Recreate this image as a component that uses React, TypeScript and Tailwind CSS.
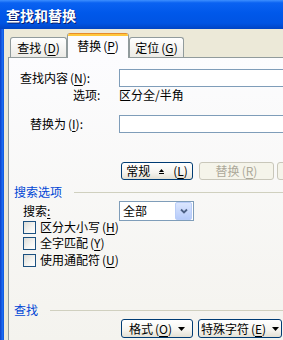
import React from "react";

const U = ({ c }: { c: string }) => (
  <span className="ml-[2px]">
    (<span className="underline underline-offset-[2px]">{c}</span>)
  </span>
);

const DownTri = () => (
  <svg width="7" height="4" viewBox="0 0 7 4" className="ml-[6px]">
    <path d="M0 0H7L3.5 4Z" fill="#000" />
  </svg>
);

const UpTri = () => (
  <svg width="7" height="7" viewBox="0 0 7 7" className="mx-[8px]">
    <path d="M1 4H6L3.5 1Z" fill="#000" />
    <rect x="1" y="5" width="5" height="1" fill="#000" />
  </svg>
);

const Btn = ({
  w,
  children,
  disabled,
}: {
  w: string;
  children: React.ReactNode;
  disabled?: boolean;
}) => (
  <div
    className={
      "h-[18px] shrink-0 rounded-[3px] border flex items-center justify-center text-[12px] leading-none " +
      w +
      (disabled
        ? " border-[#c9c7ba] bg-[#f5f4ea] text-[#aca899]"
        : " border-[#003c74] bg-[linear-gradient(to_bottom,#ffffff_0%,#f5f4ef_60%,#e3e0d4_100%)] text-black")
    }
  >
    {children}
  </div>
);

const Check = ({ label, c, cls }: { label: string; c: string; cls: string }) => (
  <div className={"flex items-center pl-[14px] " + cls}>
    <div className="w-[13px] h-[13px] border border-[#1c5180] bg-[linear-gradient(135deg,#dcdcd7_0%,#f5f5f2_60%,#ffffff_100%)] shrink-0" />
    <span className="ml-[4px]">
      {label}
      <U c={c} />
    </span>
  </div>
);

export default function App() {
  return (
    <div
      className="w-[283px] h-[340px] overflow-hidden flex flex-col text-[12px] leading-none text-black"
      style={{ fontFamily: '"Noto Sans CJK SC", "Noto Sans", sans-serif' }}
    >
      {/* Title bar */}
      <div className="h-[29px] shrink-0 flex items-center pl-[6px] bg-[linear-gradient(to_bottom,#3d8fff_0%,#0a62f2_10%,#0058ea_45%,#0054e3_80%,#0044c4_100%)]">
        <span className="text-white font-bold text-[14px] [text-shadow:1px_1px_0_#0a1e6e]">
          查找和替换
        </span>
      </div>
      <div className="flex-1 flex min-h-0">
        <div className="w-[4px] shrink-0 bg-[linear-gradient(to_right,#0b3fc8,#1c6cf0_60%,#0a55e0)]" />
        <div className="flex-1 bg-[#ece9d8] pl-[4px] flex flex-col min-w-0">
          {/* Tabs */}
          <div className="h-[28px] shrink-0 flex items-end pl-[2px] relative z-10">
            <div className="h-[20px] w-[57px] border border-b-0 border-[#919b9c] rounded-t-[3px] bg-[linear-gradient(to_bottom,#ffffff,#ecebe6)] flex items-center justify-center">
              <span>
                查找
                <U c="D" />
              </span>
            </div>
            <div className="h-[25px] w-[62px] -mb-px border-x border-[#919b9c] rounded-t-[3px] bg-[#fcfcfe] flex flex-col overflow-hidden">
              <div className="h-[1px] bg-[#e68b2c]" />
              <div className="h-[2px] bg-[#ffc73c]" />
              <div className="flex-1 flex items-center justify-center pb-[2px]">
                <span>
                  替换
                  <U c="P" />
                </span>
              </div>
            </div>
            <div className="h-[20px] w-[55px] border border-b-0 border-[#919b9c] rounded-t-[3px] bg-[linear-gradient(to_bottom,#ffffff,#ecebe6)] flex items-center justify-center">
              <span>
                定位
                <U c="G" />
              </span>
            </div>
          </div>
          {/* Panel */}
          <div className="flex-1 relative border-l border-t border-[#919b9c] bg-[linear-gradient(to_bottom,#fcfcfe,#f4f3ee)] flex flex-col">
            <div className="mt-[11px] h-[18px] flex items-center">
              <div className="w-[110px] shrink-0 pl-[11px]">
                查找内容
                <U c="N" />:
              </div>
              <div className="w-[200px] h-[18px] shrink-0 border border-[#7f9db9] bg-white" />
            </div>
            <div className="h-[16px] flex items-center">
              <div className="w-[110px] shrink-0 pl-[64px]">选项:</div>
              <div>区分全/半角</div>
            </div>
            <div className="mt-[12px] h-[18px] flex items-center">
              <div className="w-[110px] shrink-0 pl-[21px]">
                替换为
                <U c="I" />:
              </div>
              <div className="w-[200px] h-[18px] shrink-0 border border-[#7f9db9] bg-white" />
            </div>
            <div className="mt-[29px] flex pl-[112px] gap-[6px]">
              <Btn w="w-[72px]">
                常规
                <UpTri />
                <span>
                  (<span className="underline underline-offset-[2px]">L</span>)
                </span>
              </Btn>
              <Btn w="w-[75px]" disabled>
                替换
                <U c="R" />
              </Btn>
              <div className="ml-[-3px]">
                <Btn w="w-[60px]" disabled>
                  全部替换
                </Btn>
              </div>
            </div>
            <div className="mt-[5px] h-[14px] flex items-center pl-[5px]">
              <span className="text-[#0046d5]">搜索选项</span>
              <div className="flex-1 ml-[12px] h-px bg-[#d0d0bf]" />
            </div>
            <div className="mt-[2px] h-[20px] flex items-center">
              <div className="w-[110px] shrink-0 pl-[14px]">
                搜索<span className="underline underline-offset-[2px]">:</span>
              </div>
              <div className="w-[75px] h-[20px] border border-[#7f9db9] bg-white flex items-center">
                <span className="pl-[3px] flex-1">全部</span>
                <div className="w-[17px] h-[18px] rounded-[2px] bg-[linear-gradient(to_bottom,#dbe6fe,#b6cbfa)] border border-[#b9cdf8] flex items-center justify-center mr-px">
                  <svg width="8" height="6" viewBox="0 0 8 6">
                    <path d="M1 1.5L4 4.5L7 1.5" stroke="#4d6185" strokeWidth="1.8" fill="none" />
                  </svg>
                </div>
              </div>
            </div>
            <Check label="区分大小写" c="H" cls="h-[16px] -mt-[2px]" />
            <Check label="全字匹配" c="Y" cls="h-[16px]" />
            <Check label="使用通配符" c="U" cls="h-[18px]" />
            <div className="mt-[34px] h-[14px] flex items-center pl-[5px]">
              <span className="text-[#0046d5]">查找</span>
              <div className="flex-1 ml-[12px] h-px bg-[#d0d0bf]" />
            </div>
            <div className="mt-[2px] flex pl-[112px] gap-[5px]">
              <Btn w="w-[72px] !h-[19px]">
                格式
                <U c="O" />
                <DownTri />
              </Btn>
              <Btn w="w-[84px] !h-[19px]">
                特殊字符
                <U c="E" />
                <DownTri />
              </Btn>
            </div>
          </div>
        </div>
      </div>
    </div>
  );
}
